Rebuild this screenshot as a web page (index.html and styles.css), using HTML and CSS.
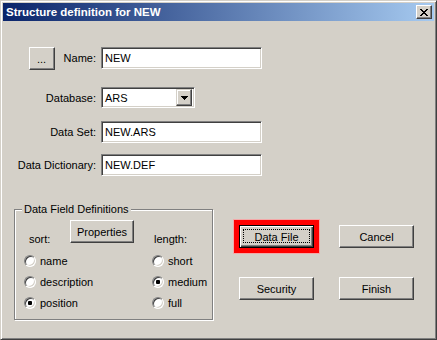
FILE: index.html
```html
<!DOCTYPE html>
<html>
<head>
<meta charset="utf-8">
<link rel="stylesheet" href="styles.css">
</head>
<body>
<div class="window">
  <div class="titlebar">
    <span class="title">Structure definition for NEW</span>
    <div class="btn close"><svg width="8" height="7" viewBox="0 0 8 7" shape-rendering="crispEdges"><path fill="#000" d="M0 0h2v1h-2z M6 0h2v1h-2z M1 1h2v1h-2z M5 1h2v1h-2z M2 2h4v1h-4z M3 3h2v1h-2z M2 4h4v1h-4z M1 5h2v1h-2z M5 5h2v1h-2z M0 6h2v1h-2z M6 6h2v1h-2z"/></svg></div>
  </div>
  <div class="content">
    <div class="form">
      <div class="row row-name">
        <div class="label"><div class="btn dots">...</div><span>Name:</span></div>
        <div class="edit">NEW</div>
      </div>
      <div class="row row-db">
        <div class="label"><span>Database:</span></div>
        <div class="combo"><span class="combo-text">ARS</span><div class="btn combo-btn"><svg width="7" height="4" viewBox="0 0 7 4" shape-rendering="crispEdges"><path fill="#000" d="M0 0h7v1h-7z M1 1h5v1h-5z M2 2h3v1h-3z M3 3h1v1h-1z"/></svg></div></div>
      </div>
      <div class="row row-set">
        <div class="label"><span>Data Set:</span></div>
        <div class="edit">NEW.ARS</div>
      </div>
      <div class="row row-dict">
        <div class="label"><span>Data Dictionary:</span></div>
        <div class="edit">NEW.DEF</div>
      </div>
    </div>
    <div class="lower">
      <fieldset class="group">
        <legend>Data Field Definitions</legend>
        <div class="group-head">
          <span class="hd hd-sort">sort:</span>
          <div class="btn props">Properties</div>
          <span class="hd hd-length">length:</span>
        </div>
        <div class="radios">
          <div class="radio"><span class="rb"></span><span>name</span></div>
          <div class="radio"><span class="rb"></span><span>short</span></div>
          <div class="radio"><span class="rb"></span><span>description</span></div>
          <div class="radio"><span class="rb checked"></span><span>medium</span></div>
          <div class="radio"><span class="rb checked"></span><span>position</span></div>
          <div class="radio"><span class="rb"></span><span>full</span></div>
        </div>
      </fieldset>
      <div class="actions">
        <div class="btn default marked"><span class="focus">Data File</span></div>
        <div class="btn">Cancel</div>
        <div class="btn">Security</div>
        <div class="btn">Finish</div>
      </div>
    </div>
  </div>
</div>
</body>
</html>
```
FILE: styles.css
```css
html, body {
  margin: 0;
  padding: 0;
  background: #d4d0c8;
}
body {
  font: 11px "Liberation Sans", Arial, sans-serif;
  color: #000;
}
.window {
  width: 437px;
  height: 340px;
  box-sizing: border-box;
  background: #d4d0c8;
  border: 1px solid;
  border-color: #d4d0c8 #404040 #404040 #d4d0c8;
  box-shadow: inset 1px 1px #fff, inset -1px -1px #808080;
  padding: 2px;
}
.titlebar {
  height: 18px;
  display: flex;
  align-items: center;
  justify-content: space-between;
  padding: 0 2px 0 3px;
  background: linear-gradient(to right, #0a246a, #a6caf0);
}
.title {
  color: #fff;
  font-weight: bold;
  font-size: 11.5px;
  white-space: nowrap;
}
.btn {
  box-sizing: border-box;
  background: #d4d0c8;
  border: 1px solid;
  border-color: #fff #404040 #404040 #fff;
  box-shadow: inset -1px -1px #808080, inset 1px 1px #d4d0c8;
  display: flex;
  align-items: center;
  justify-content: center;
  white-space: nowrap;
}
.close {
  width: 16px;
  height: 14px;
}
.content {
  padding-left: 17px;
}
.form {
  display: flex;
  flex-direction: column;
}
.row {
  display: flex;
  align-items: center;
  gap: 5px;
}
.row-name { margin-top: 24px; }
.row-db { margin-top: 17px; }
.row-set { margin-top: 13px; }
.row-dict { margin-top: 11px; }
.label {
  width: 76px;
  display: flex;
  justify-content: flex-end;
  align-items: center;
  gap: 9px;
  white-space: nowrap;
}
.dots {
  width: 26px;
  height: 23px;
  margin-top: 2px;
}
.edit {
  width: 161px;
  height: 22px;
  box-sizing: border-box;
  background: #fff;
  border: 1px solid;
  border-color: #808080 #fff #fff #808080;
  box-shadow: inset 1px 1px #404040, inset -1px -1px #d4d0c8;
  padding: 0 3px;
  line-height: 20px;
}
.combo {
  width: 94px;
  height: 21px;
  box-sizing: border-box;
  background: #fff;
  border: 1px solid;
  border-color: #808080 #fff #fff #808080;
  box-shadow: inset 1px 1px #404040, inset -1px -1px #d4d0c8;
  padding: 2px;
  display: flex;
  align-items: center;
  justify-content: space-between;
}
.combo-text {
  padding-left: 1px;
}
.combo-btn {
  width: 16px;
  height: 17px;
  border-color: #d4d0c8 #404040 #404040 #d4d0c8;
  box-shadow: inset -1px -1px #808080, inset 1px 1px #fff;
}
.lower {
  display: flex;
  align-items: flex-start;
  margin-left: -6px;
  margin-top: 27px;
}
.group {
  width: 199px;
  box-sizing: border-box;
  margin: 0;
  padding: 0 0 6px 9px;
  border: 1px solid #808080;
  box-shadow: inset 1px 1px #fff, 1px 1px #fff;
  min-width: 0;
}
.group legend {
  padding: 0 2px;
  margin-left: -2px;
  line-height: 13px;
  background: #d4d0c8;
}
.group-head {
  display: flex;
  align-items: flex-end;
  margin-top: 4px;
}
.hd {
  line-height: 13px;
  margin-bottom: -3px;
}
.hd-sort {
  width: 41px;
  padding-left: 5px;
}
.props {
  width: 64px;
  height: 23px;
}
.hd-length {
  margin-left: 20px;
}
.radios {
  display: grid;
  grid-template-columns: 128px auto;
  grid-auto-rows: 21px;
  margin-top: 7px;
}
.radio {
  display: flex;
  align-items: center;
  gap: 4px;
}
.rb {
  width: 12px;
  height: 12px;
  box-sizing: border-box;
  border-radius: 50%;
  background: #fff;
  border: 1px solid;
  border-color: #808080 #fff #fff #808080;
  box-shadow: inset 1px 1px #404040, inset -1px -1px #d4d0c8;
  display: flex;
  align-items: center;
  justify-content: center;
}
.rb.checked::after {
  content: "";
  width: 4px;
  height: 4px;
  border-radius: 1px;
  background: #000;
}
.actions {
  display: grid;
  grid-template-columns: 75px 75px;
  grid-auto-rows: 23px;
  column-gap: 25px;
  row-gap: 29px;
  margin-left: 26px;
  margin-top: 22px;
}
.default {
  position: relative;
  border: 1px solid #000;
  box-shadow: inset 1px 1px #fff, inset -1px -1px #404040, inset -2px -2px #808080;
}
.marked {
  outline: 5px solid #ff0000;
  outline-offset: 0;
  box-shadow: inset 1px 1px #fff, inset -1px -1px #404040, inset -2px -2px #808080, 0 0 0 6px #f4a8a8;
}
.focus::after {
  content: "";
  position: absolute;
  top: 3px;
  left: 3px;
  right: 3px;
  bottom: 4px;
  border: 1px dotted #000;
}
```
